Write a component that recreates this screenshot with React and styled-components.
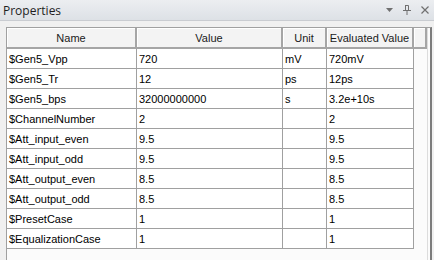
import React from 'react';
import styled, { createGlobalStyle } from 'styled-components';

const GlobalStyle = createGlobalStyle`
  html, body {
    margin: 0;
    padding: 0;
    background: #f0f0f0;
  }
`;

const Panel = styled.div`
  width: 434px;
  height: 260px;
  overflow: hidden;
  background: #f0f0f0;
  display: flex;
  flex-direction: column;
`;

const TitleBar = styled.div`
  height: 21px;
  flex: none;
  display: flex;
  flex-direction: row;
  align-items: center;
  justify-content: space-between;
  padding: 0 5px 0 3px;
  box-sizing: border-box;
  background: linear-gradient(#eceef1, #dde1e6);
  border-bottom: 1px solid #c9ccd1;
`;

const Title = styled.div`
  font-family: "Open Sans", "Liberation Sans", sans-serif;
  font-size: 12px;
  color: #1e1e1e;
`;

const Tools = styled.div`
  display: flex;
  flex-direction: row;
  align-items: center;
  gap: 10px;
  color: #707070;

  svg {
    display: block;
  }
`;

const Body = styled.div`
  flex: 1;
  display: flex;
  padding: 6px 2px 0 6px;
  min-height: 0;
`;

const Grid = styled.div`
  flex: 1;
  background: #fbfbfb;
  border-top: 1px solid #a0a0a0;
  border-left: 1px solid #a0a0a0;
  border-right: 2px solid #7c7c7c;
  box-shadow: inset -2px 0 0 #fbfbfb, inset -3px 0 0 #dcdcdc;
  font-family: "Liberation Sans", Arial, sans-serif;
  font-size: 11px;
  color: #000;
`;

const Row = styled.div`
  display: grid;
  grid-template-columns: 130px 146px 44px 87px ${p => (p.$header ? '13px' : '')};
  height: ${p => (p.$header ? '21px' : '20px')};
`;

const HeadCell = styled.div`
  display: flex;
  align-items: center;
  justify-content: center;
  background: #f3f3f3;
  border-right: 2px solid #a5a5a5;
  border-bottom: 2px solid #a5a5a5;
  box-sizing: border-box;
  box-shadow: inset 1px 1px 0 #ffffff;
  color: #1a1a1a;
`;

const Cell = styled.div`
  display: flex;
  align-items: center;
  padding-left: 2px;
  background: #ffffff;
  border-right: 1px solid #a0a0a0;
  border-bottom: 1px solid #a0a0a0;
  box-sizing: border-box;
  white-space: nowrap;
  overflow: hidden;
  padding-top: 1px;
`;

const rows = [
  ['$Gen5_Vpp', '720', 'mV', '720mV'],
  ['$Gen5_Tr', '12', 'ps', '12ps'],
  ['$Gen5_bps', '32000000000', 's', '3.2e+10s'],
  ['$ChannelNumber', '2', '', '2'],
  ['$Att_input_even', '9.5', '', '9.5'],
  ['$Att_input_odd', '9.5', '', '9.5'],
  ['$Att_output_even', '8.5', '', '8.5'],
  ['$Att_output_odd', '8.5', '', '8.5'],
  ['$PresetCase', '1', '', '1'],
  ['$EqualizationCase', '1', '', '1'],
];

const Pin = () => (
  <svg width="8" height="10" viewBox="0 0 8 10">
    <path d="M2 0.5h3.5v5M2.5 0.5v5" stroke="currentColor" fill="none" />
    <path d="M0 5.5h8M4 5.5v4.5" stroke="currentColor" />
  </svg>
);

const App = () => (
  <Panel>
    <GlobalStyle />
    <TitleBar>
      <Title>Properties</Title>
      <Tools>
        <svg width="7" height="4" viewBox="0 0 7 4">
          <path d="M0 0h7L3.5 4z" fill="currentColor" />
        </svg>
        <Pin />
        <svg width="8" height="8" viewBox="0 0 8 8">
          <path d="M0.5 0.5l7 7M7.5 0.5l-7 7" stroke="currentColor" strokeWidth="1.2" />
        </svg>
      </Tools>
    </TitleBar>
    <Body>
      <Grid>
        <Row $header>
          <HeadCell>Name</HeadCell>
          <HeadCell>Value</HeadCell>
          <HeadCell>Unit</HeadCell>
          <HeadCell>Evaluated Value</HeadCell>
          <HeadCell />
        </Row>
        {rows.map(r => (
          <Row key={r[0]}>
            {r.map((v, i) => (
              <Cell key={i}>{v}</Cell>
            ))}
          </Row>
        ))}
      </Grid>
    </Body>
  </Panel>
);

export default App;
